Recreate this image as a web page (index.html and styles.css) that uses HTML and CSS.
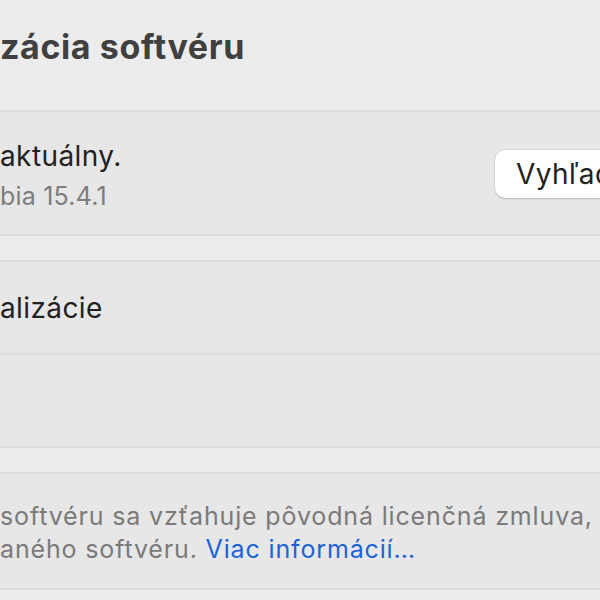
FILE: index.html
```html
<!DOCTYPE html>
<html lang="sk">
<head>
<meta charset="utf-8">
<link rel="stylesheet" href="styles.css">
</head>
<body>
<div class="page">
  <header class="header"><h1 class="title">zácia softvéru</h1></header>

  <section class="card status">
    <div class="status-text">
      <div class="primary">aktuálny.</div>
      <div class="secondary">bia 15.4.1</div>
    </div>
    <button class="btn">Vyhľadať aktualizácie…</button>
  </section>

  <section class="card list">
    <div class="row"><span class="primary">alizácie</span></div>
    <div class="row"></div>
  </section>

  <section class="card note">
    <p class="note-text">softvéru sa vzťahuje pôvodná licenčná zmluva,<br>aného softvéru. <a class="link" href="#">Viac informácií…</a></p>
  </section>
</div>
</body>
</html>
```
FILE: styles.css
```css
html, body {
  margin: 0;
  padding: 0;
  background: #ececec;
  overflow: hidden;
  width: 600px;
  height: 600px;
}
.page {
  font-family: Inter, "Noto Sans", sans-serif;
  display: flex;
  flex-direction: column;
  gap: 24px;
  width: 900px;
}
.header {
  height: 86px;
  display: flex;
  align-items: flex-end;
}
.title {
  margin: 0 0 22px 0;
  font-size: 34px;
  letter-spacing: 0.6px;
  font-weight: 700;
  color: #404040;
  line-height: 1;
}
.card {
  background: #e7e7e7;
  border-top: 2px solid #dddddd;
  border-bottom: 2px solid #dddddd;
  box-sizing: border-box;
}
.status {
  height: 126px;
  display: flex;
  align-items: center;
}
.status-text {
  flex: 0 0 495px;
  display: flex;
  flex-direction: column;
  gap: 6px;
  margin-top: 6px;
}
.primary {
  font-size: 28px;
  letter-spacing: 0.4px;
  color: #222222;
  line-height: 34px;
}
.secondary {
  font-size: 25px;
  letter-spacing: 0.2px;
  color: #7d7d7d;
  line-height: 34px;
}
.btn {
  font: inherit;
  font-size: 28px;
  letter-spacing: 0.4px;
  color: #222222;
  background: #ffffff;
  border: none;
  border-radius: 10px;
  height: 48px;
  padding: 0 21px;
  white-space: nowrap;
  box-shadow: 0 1px 2px rgba(0,0,0,0.18), 0 0 0 0.5px rgba(0,0,0,0.08);
  margin-top: 2px;
}
.list {
  height: 188px;
  display: flex;
  flex-direction: column;
}
.row {
  flex: 1;
  display: flex;
  align-items: center;
}
.row + .row {
  border-top: 2px solid #dddddd;
}
.note {
  height: 118px;
  display: flex;
  align-items: center;
  padding-top: 4px;
}
.note-text {
  margin: 0;
  font-size: 25px;
  letter-spacing: 0.85px;
  line-height: 33px;
  color: #7a7a7a;
  white-space: nowrap;
}
.link {
  color: #1e63d6;
  text-decoration: none;
}
```
